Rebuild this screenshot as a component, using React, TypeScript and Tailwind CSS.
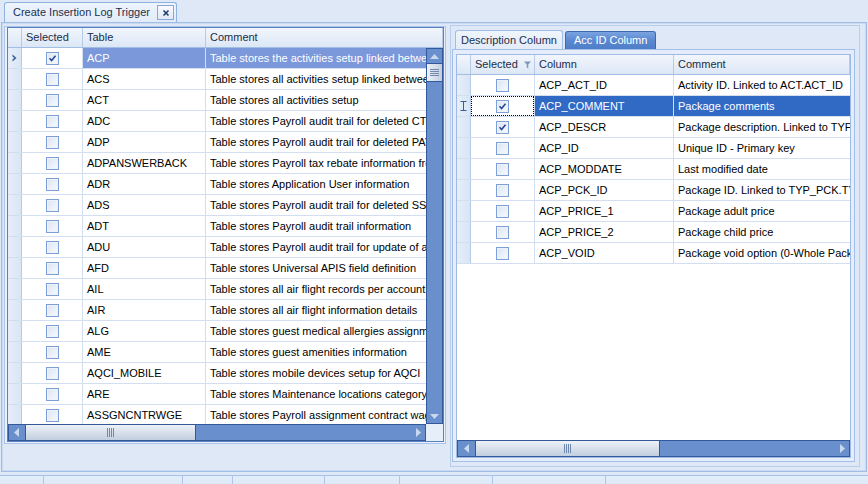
import React from "react";

const leftRows: [string, string, boolean][] = [
  ["ACP", "Table stores the activities setup linked between packages", true],
  ["ACS", "Table stores all activities setup linked between packages", false],
  ["ACT", "Table stores all activities setup", false],
  ["ADC", "Table stores Payroll audit trail for deleted CTR records", false],
  ["ADP", "Table stores Payroll audit trail for deleted PAY records", false],
  ["ADPANSWERBACK", "Table stores Payroll tax rebate information from answerback", false],
  ["ADR", "Table stores Application User information", false],
  ["ADS", "Table stores Payroll audit trail for deleted SSH records", false],
  ["ADT", "Table stores Payroll audit trail information", false],
  ["ADU", "Table stores Payroll audit trail for update of assignments", false],
  ["AFD", "Table stores Universal APIS field definition", false],
  ["AIL", "Table stores all air flight records per account.", false],
  ["AIR", "Table stores all air flight information details", false],
  ["ALG", "Table stores guest medical allergies assignment", false],
  ["AME", "Table stores guest amenities information", false],
  ["AQCI_MOBILE", "Table stores mobile devices setup for AQCI", false],
  ["ARE", "Table stores Maintenance locations category", false],
  ["ASSGNCNTRWGE", "Table stores Payroll assignment contract wages", false],
];

const rightRows: [string, string, boolean][] = [
  ["ACP_ACT_ID", "Activity ID. Linked to ACT.ACT_ID", false],
  ["ACP_COMMENT", "Package comments", true],
  ["ACP_DESCR", "Package description. Linked to TYP_DESCR", true],
  ["ACP_ID", "Unique ID - Primary key", false],
  ["ACP_MODDATE", "Last modified date", false],
  ["ACP_PCK_ID", "Package ID. Linked to TYP_PCK.TYP_ID", false],
  ["ACP_PRICE_1", "Package adult price", false],
  ["ACP_PRICE_2", "Package child price", false],
  ["ACP_VOID", "Package void option (0-Whole Package, 1-Item)", false],
];

function CheckBox({ checked }: { checked: boolean }) {
  return (
    <div className="w-[13px] h-[13px] border border-[#7c9fd8] bg-gradient-to-br from-[#dce5f2] to-[#f8fafd] shadow-[inset_0_0_0_1px_#eef3fa] flex items-center justify-center">
      {checked && (
        <svg width="9" height="9" viewBox="0 0 9 9">
          <path d="M1.5 4.3 L3.6 6.5 L7.5 1.8" stroke="#24479a" strokeWidth="1.6" fill="none" />
        </svg>
      )}
    </div>
  );
}

function Grip({ vertical }: { vertical?: boolean }) {
  if (vertical) {
    return (
      <svg width="9" height="8" viewBox="0 0 9 8">
        <path d="M0 0.5H9M0 2.5H9M0 4.5H9M0 6.5H9" stroke="#6f87ab" strokeWidth="1" />
      </svg>
    );
  }
  return (
    <svg width="8" height="9" viewBox="0 0 8 9">
      <path d="M0.5 0V9M2.5 0V9M4.5 0V9M6.5 0V9" stroke="#6f87ab" strokeWidth="1" />
    </svg>
  );
}

function HScroll({ leftBtn, thumb, rightBtn }: { leftBtn: number; thumb: number; rightBtn: number }) {
  return (
    <div className="h-[17px] shrink-0 bg-[#6990cc] border border-[#33599a] flex">
      <div className="h-full flex items-center justify-center shrink-0" style={{ width: leftBtn }}>
        <svg width="6" height="9" viewBox="0 0 6 9">
          <path d="M5 0 L0 4.5 L5 9 Z" fill="#c9d8ef" />
        </svg>
      </div>
      <div
        className="h-full shrink-0 border-x border-[#33599a] bg-gradient-to-b from-[#eef2f8] via-[#d7e0eb] to-[#c2cedf] flex items-center justify-center"
        style={{ width: thumb }}
      >
        <Grip />
      </div>
      <div className="flex-1" />
      <div className="h-full flex items-center justify-center shrink-0" style={{ width: rightBtn }}>
        <svg width="6" height="9" viewBox="0 0 6 9">
          <path d="M0 0 L5 4.5 L0 9 Z" fill="#c9d8ef" />
        </svg>
      </div>
    </div>
  );
}

function HeaderCell({ w, children, last }: { w?: number; children?: React.ReactNode; last?: boolean }) {
  return (
    <div
      className={`h-full flex items-center pl-[4px] text-[#1a2c48] whitespace-nowrap overflow-hidden ${last ? "flex-1 border-r border-[#b7cbe9]" : "shrink-0 border-r border-[#b7cbe9]"}`}
      style={w ? { width: w } : undefined}
    >
      {children}
    </div>
  );
}

export default function App() {
  const F = "font-['Liberation_Sans',Arial,sans-serif]";
  return (
    <div className={`w-[868px] h-[484px] overflow-hidden bg-[#dfe8f6] ${F} text-[11px] text-black flex flex-col`}>
      {/* document tab strip */}
      <div className="h-[22px] shrink-0 flex items-end pl-[4px]">
        <div className="w-[173px] h-[20px] border border-b-0 border-[#8fb1e1] rounded-t-[3px] bg-gradient-to-b from-[#eef4fc] to-[#e2ebf8] flex items-center pl-[8px] pr-[2px] text-[#1b2f4e]">
          <span className="flex-1 whitespace-nowrap">Create Insertion Log Trigger</span>
          <div className="w-[17px] h-[15px] border border-[#86a7d9] bg-gradient-to-b from-[#f8fafd] to-[#e1e9f5] flex items-center justify-center">
            <svg width="8" height="8" viewBox="0 0 8 8">
              <path d="M1.5 1.5L6.5 6.5M6.5 1.5L1.5 6.5" stroke="#1f3c6e" strokeWidth="1.6" />
            </svg>
          </div>
        </div>
      </div>

      {/* main panel */}
      <div className="h-[450px] shrink-0 mx-[1px] border border-[#a2bde5]">
        <div className="h-full border border-[#cadaf1] flex items-start">
          {/* left box */}
          <div className="ml-[1px] mt-[2px] w-[442px] h-[418px] shrink-0 border border-[#a9c3e9] bg-[#eaf1fb] pl-[2px] pr-[1px] pb-[1px]">
            <div className="w-[437px] h-[415px] border border-[#5b80bf] flex flex-col bg-white">
              {/* header */}
              <div className="h-[20px] shrink-0 flex border-b border-[#a3bee5] bg-gradient-to-b from-[#f2f6fc] to-[#dce7f6]">
                <HeaderCell w={14} />
                <HeaderCell w={61}>Selected</HeaderCell>
                <HeaderCell w={123}>Table</HeaderCell>
                <HeaderCell last>Comment</HeaderCell>
              </div>
              {/* body */}
              <div className="flex-1 flex min-h-0">
                <div className="w-[418px] shrink-0 flex flex-col">
                  <div className="flex-1 overflow-hidden min-h-0">
                    {leftRows.map(([t, c, sel], i) => (
                      <div key={t} className="h-[21px] flex border-b border-[#d3dff1]">
                        <div className="w-[14px] shrink-0 bg-gradient-to-r from-[#e6eef9] to-[#d9e5f5] border-r border-[#b7cbe9] flex items-center justify-center">
                          {i === 0 && (
                            <svg width="6" height="8" viewBox="0 0 6 8">
                              <path d="M0.5 0.5 L4.5 4 L0.5 7.5 L0.5 5.5 L2.3 4 L0.5 2.5 Z" fill="#3a5a94" />
                            </svg>
                          )}
                        </div>
                        <div className="w-[61px] shrink-0 border-r border-[#d3dff1] flex items-center justify-center">
                          <CheckBox checked={sel} />
                        </div>
                        <div className={`w-[123px] shrink-0 border-r border-[#d3dff1] flex items-center pl-[4px] whitespace-nowrap overflow-hidden ${i === 0 ? "bg-[#7b98db] text-white" : ""}`}>
                          {t}
                        </div>
                        <div className={`flex-1 flex items-center pl-[4px] whitespace-nowrap overflow-hidden ${i === 0 ? "bg-[#7b98db] text-white" : ""}`}>
                          {c}
                        </div>
                      </div>
                    ))}
                  </div>
                  <HScroll leftBtn={16} thumb={171} rightBtn={12} />
                </div>
                <div className="flex-1 flex flex-col">
                  <div className="flex-1 bg-[#6990cc] border border-[#33599a] flex flex-col">
                    <div className="h-[14px] flex items-center justify-center shrink-0">
                      <svg width="9" height="5" viewBox="0 0 9 5">
                        <path d="M0 5 L4.5 0 L9 5 Z" fill="#c9d8ef" />
                      </svg>
                    </div>
                    <div className="h-[19px] shrink-0 border-y border-[#33599a] bg-gradient-to-r from-[#eef2f8] via-[#d7e0eb] to-[#c2cedf] flex items-center justify-center">
                      <Grip vertical />
                    </div>
                    <div className="flex-1" />
                    <div className="h-[14px] flex items-center justify-center shrink-0">
                      <svg width="9" height="5" viewBox="0 0 9 5">
                        <path d="M0 0 L4.5 5 L9 0 Z" fill="#c9d8ef" />
                      </svg>
                    </div>
                  </div>
                  <div className="h-[17px] shrink-0 bg-[#e6eef9]" />
                </div>
              </div>
            </div>
          </div>

          {/* right tab control */}
          <div className="ml-[4px] mt-[1px] w-[410px] h-[442px] shrink-0 border border-[#b9ceec] pl-[1px] pr-[4px] pb-[4px] flex flex-col">
            <div className="h-[23px] shrink-0 flex items-end pl-[3px] gap-[2px]">
              <div className="h-[19px] border border-b-0 border-[#a1bde6] rounded-t-[3px] bg-gradient-to-b from-[#f0f5fc] to-[#e2ebf8] flex items-center px-[5px] text-[#1b2f4e] whitespace-nowrap">
                Description Column
              </div>
              <div className="h-[18px] border border-b-0 border-[#3d68ad] rounded-t-[3px] bg-gradient-to-b from-[#7aa3e0] via-[#5a88d1] to-[#4f7ec8] flex items-center px-[8px] text-white whitespace-nowrap">
                Acc ID Column
              </div>
            </div>
            <div className="flex-1 border border-[#a3bfe6] bg-[#e4edf9] pt-[4px] pl-[3px] pr-[3px] pb-[3px]">
              <div className="w-full h-full border border-[#9fbbe5] bg-white flex flex-col">
                <div className="h-[20px] shrink-0 flex border-b border-[#a3bee5] bg-gradient-to-b from-[#f2f6fc] to-[#dce7f6]">
                  <HeaderCell w={14} />
                  <div className="w-[64px] shrink-0 h-full flex items-center pl-[4px] pr-[3px] text-[#1a2c48] border-r border-[#b7cbe9]">
                    <span className="flex-1 whitespace-nowrap">Selected</span>
                    <svg width="7" height="8" viewBox="0 0 7 8" className="shrink-0">
                      <path d="M0 0.5 H7 L4.3 3.5 V7.5 L2.7 6.5 V3.5 Z" fill="#8196b8" />
                    </svg>
                  </div>
                  <HeaderCell w={139}>Column</HeaderCell>
                  <HeaderCell last>Comment</HeaderCell>
                </div>
                <div className="flex-1 min-h-0 overflow-hidden">
                  {rightRows.map(([t, c, sel], i) => (
                    <div key={t} className="h-[21px] flex border-b border-[#d3dff1]">
                      <div className="w-[14px] shrink-0 bg-gradient-to-r from-[#e6eef9] to-[#d9e5f5] border-r border-[#b7cbe9] flex items-center justify-center">
                        {i === 1 && (
                          <svg width="7" height="10" viewBox="0 0 7 10">
                            <path d="M0.5 0.5H6.5M3.5 0.5V9.5M0.5 9.5H6.5" stroke="#3c5d94" strokeWidth="1" />
                          </svg>
                        )}
                      </div>
                      <div className="w-[64px] shrink-0 border-r border-[#d3dff1] flex items-center justify-center relative">
                        {i === 1 && <div className="absolute inset-[0px] border border-dotted border-black" />}
                        <CheckBox checked={sel} />
                      </div>
                      <div className={`w-[139px] shrink-0 border-r border-[#d3dff1] flex items-center pl-[4px] whitespace-nowrap overflow-hidden ${i === 1 ? "bg-[#316ac5] text-white" : ""}`}>
                        {t}
                      </div>
                      <div className={`flex-1 flex items-center pl-[4px] whitespace-nowrap overflow-hidden ${i === 1 ? "bg-[#316ac5] text-white" : ""}`}>
                        {c}
                      </div>
                    </div>
                  ))}
                </div>
                <HScroll leftBtn={17} thumb={185} rightBtn={13} />
              </div>
            </div>
          </div>
        </div>
      </div>

      {/* status bar */}
      <div className="mt-[3px] h-[20px] shrink-0 border-t border-[#a8c1e6] bg-gradient-to-b from-[#e4eefb] to-[#d3e1f4] flex">
        <div className="w-[44px] border-r border-[#b1c7e8]" />
        <div className="w-[139px] border-r border-[#b1c7e8]" />
        <div className="w-[50px] border-r border-[#b1c7e8]" />
        <div className="w-[92px] border-r border-[#b1c7e8]" />
        <div className="w-[75px] border-r border-[#b1c7e8]" />
        <div className="w-[93px] border-r border-[#b1c7e8]" />
        <div className="w-[113px] border-r border-[#b1c7e8]" />
        <div className="flex-1" />
      </div>
    </div>
  );
}
